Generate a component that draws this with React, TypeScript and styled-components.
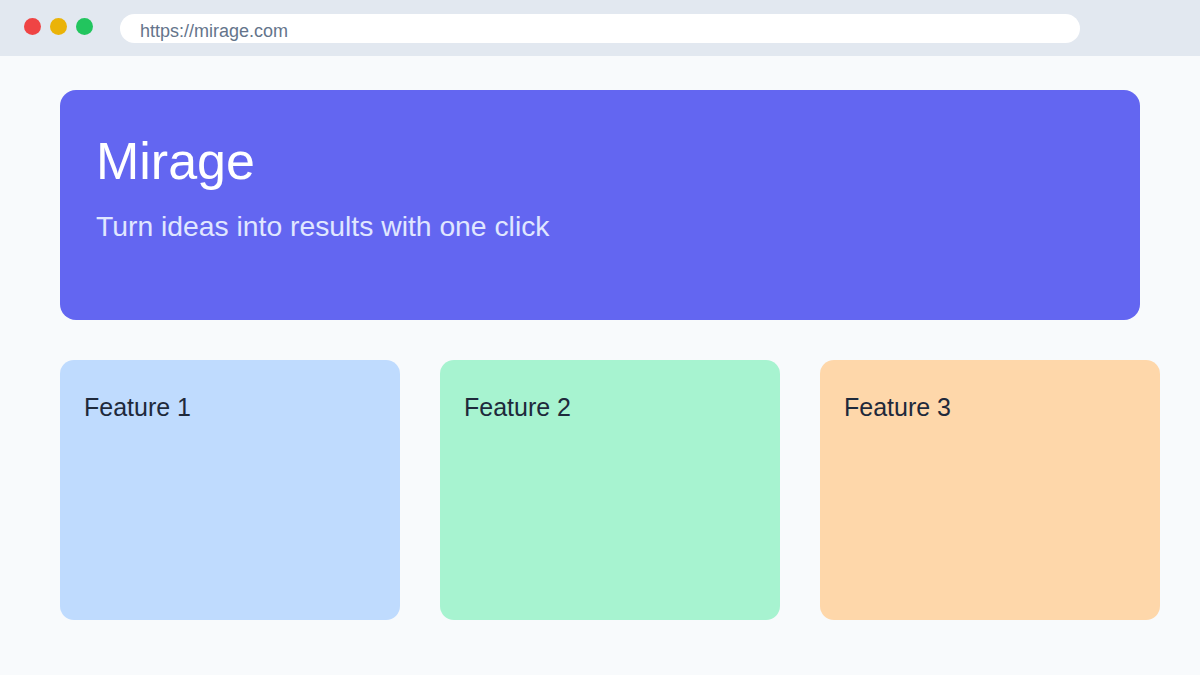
import React from 'react';
import styled, { createGlobalStyle } from 'styled-components';

const GlobalStyle = createGlobalStyle`
  html, body {
    margin: 0;
    padding: 0;
    background: #f8fafc;
    font-family: "Liberation Sans", Arial, sans-serif;
  }
`;

const features = [
  { title: 'Feature 1', color: '#bfdbfe' },
  { title: 'Feature 2', color: '#a7f3d0' },
  { title: 'Feature 3', color: '#fed7aa' },
];

const App = () => {
  return (
    <>
      <GlobalStyle />
      <Page>
        <TopBar>
          <Dots>
            <Dot color="#ef4444" />
            <Dot color="#eab308" />
            <Dot color="#22c55e" />
          </Dots>
          <UrlBar>https://mirage.com</UrlBar>
        </TopBar>
        <Main>
          <Hero>
            <Title>Mirage</Title>
            <Subtitle>Turn ideas into results with one click</Subtitle>
          </Hero>
          <Cards>
            {features.map((f) => (
              <Card key={f.title} bg={f.color}>
                <CardTitle>{f.title}</CardTitle>
              </Card>
            ))}
          </Cards>
        </Main>
      </Page>
    </>
  );
};

const Page = styled.div`
  width: 1200px;
  height: 675px;
  overflow: hidden;
  background: #f8fafc;
`;

const TopBar = styled.header`
  height: 56px;
  background: #e2e8f0;
  display: flex;
  align-items: flex-start;
  padding: 0 24px;
  box-sizing: border-box;
`;

const Dots = styled.div`
  display: flex;
  gap: 9px;
  margin-top: 18px;
`;

const Dot = styled.span<{ color: string }>`
  width: 17px;
  height: 17px;
  border-radius: 50%;
  background: ${(p) => p.color};
`;

const UrlBar = styled.div`
  margin: 14px 0 0 27px;
  width: 960px;
  height: 29px;
  border-radius: 15px;
  background: #ffffff;
  box-sizing: border-box;
  padding: 8px 20px 0;
  color: #64748b;
  font-size: 18px;
  line-height: 1;
`;

const Main = styled.main`
  padding: 34px 60px 0;
`;

const Hero = styled.section`
  width: 1080px;
  height: 230px;
  box-sizing: border-box;
  background: #6366f1;
  border-radius: 16px;
  padding: 45px 36px 0;
`;

const Title = styled.h1`
  margin: 0;
  font-size: 52px;
  font-weight: 400;
  line-height: 1;
  color: #ffffff;
`;

const Subtitle = styled.p`
  margin: 25px 0 0;
  font-size: 28.3px;
  line-height: 1;
  color: #e0e7ff;
`;

const Cards = styled.div`
  display: grid;
  grid-template-columns: repeat(3, 340px);
  gap: 40px;
  margin-top: 40px;
`;

const Card = styled.div<{ bg: string }>`
  height: 260px;
  background: ${(p) => p.bg};
  border-radius: 14px;
  box-sizing: border-box;
  padding: 35px 24px 0;
`;

const CardTitle = styled.h3`
  margin: 0;
  font-size: 25px;
  font-weight: 400;
  line-height: 1;
  color: #1e293b;
`;

export default App;
